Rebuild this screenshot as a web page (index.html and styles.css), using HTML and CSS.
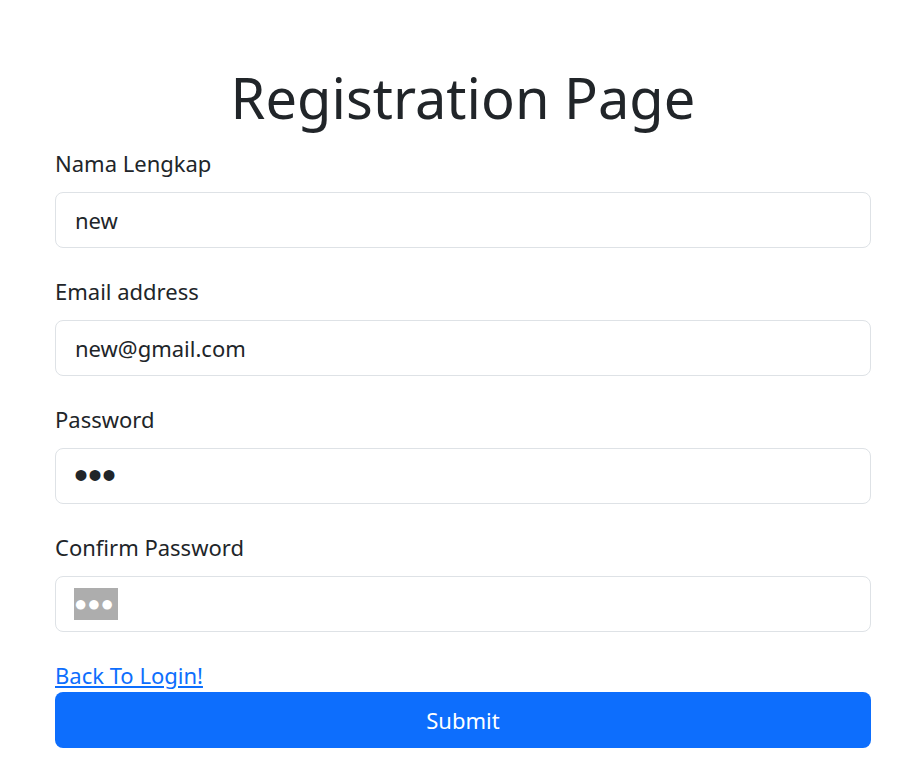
FILE: index.html
```html
<!DOCTYPE html>
<html lang="id">
<head>
<meta charset="utf-8">
<title>Registration Page</title>
<link rel="stylesheet" href="styles.css">
</head>
<body>
<main class="page">
  <h1 class="title">Registration Page</h1>
  <form class="form">
    <div class="field">
      <label class="label" for="nama">Nama Lengkap</label>
      <input class="control" id="nama" type="text" value="new">
    </div>
    <div class="field">
      <label class="label" for="email">Email address</label>
      <input class="control" id="email" type="email" value="new@gmail.com">
    </div>
    <div class="field">
      <label class="label" for="pw">Password</label>
      <input class="control control-pw" id="pw" type="password" value="abc">
    </div>
    <div class="field">
      <label class="label" for="pw2">Confirm Password</label>
      <div class="control control-fake" id="pw2"><span class="selected">●●●</span></div>
    </div>
    <a class="back" href="#">Back To Login!</a>
    <button class="submit" type="button">Submit</button>
  </form>
</main>
</body>
</html>
```
FILE: styles.css
```css
* { box-sizing: border-box; }
html, body { margin: 0; background: #fff; }
body {
  font-family: "Noto Sans", "Open Sans", sans-serif;
  color: #212529;
}
.page {
  padding: 61px 44px 0 55px;
}
.title {
  margin: 0 0 13px;
  text-align: center;
  font-size: 56px;
  font-weight: 400;
  line-height: 73px;
}
.form {
  display: flex;
  flex-direction: column;
}
.field {
  display: flex;
  flex-direction: column;
  margin-bottom: 27.5px;
}
.label {
  font-size: 22px;
  line-height: 33px;
  margin-bottom: 11.5px;
}
.control {
  height: 56px;
  border: 1px solid #dee2e6;
  border-radius: 8px;
  padding: 0 19px;
  font-family: inherit;
  font-size: 22px;
  color: #212529;
  background: #fff;
  outline: none;
}
.control-pw {
  font-family: "Liberation Sans", sans-serif;
  font-size: 40px;
  padding-left: 18px;
}
.control-fake {
  display: flex;
  align-items: center;
  padding-left: 18px;
}
.selected {
  font-family: "Liberation Sans", sans-serif;
  background: #adadad;
  color: #fff;
  font-size: 22px;
  line-height: 32px;
  padding-right: 4px;
}
.back {
  font-size: 22px;
  line-height: 33px;
  color: #0d6efd;
  align-self: flex-start;
}
.submit {
  height: 56px;
  border: 0;
  border-radius: 8px;
  background: #0d6efd;
  color: #fff;
  font-family: inherit;
  font-size: 22px;
}
```
